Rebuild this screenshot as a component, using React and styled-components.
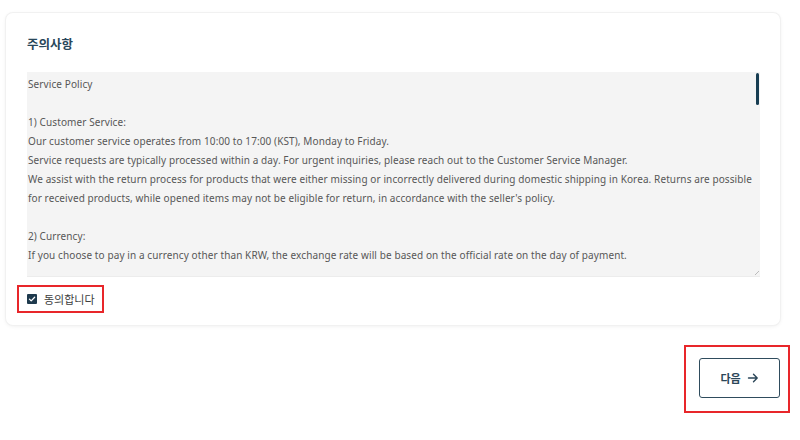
import React from "react";
import styled, { createGlobalStyle } from "styled-components";

const policy = `Service Policy

1) Customer Service:
Our customer service operates from 10:00 to 17:00 (KST), Monday to Friday.
Service requests are typically processed within a day. For urgent inquiries, please reach out to the Customer Service Manager.
We assist with the return process for products that were either missing or incorrectly delivered during domestic shipping in Korea. Returns are possible
for received products, while opened items may not be eligible for return, in accordance with the seller's policy.

2) Currency:
If you choose to pay in a currency other than KRW, the exchange rate will be based on the official rate on the day of payment.`;

export default function App() {
  return (
    <>
      <GlobalStyle />
      <Page>
        <Card>
          <Title>주의사항</Title>
          <PolicyBox>
            <PolicyText>{policy}</PolicyText>
            <Thumb />
            <Grip />
          </PolicyBox>
          <AgreeRow>
            <Highlight $pad="5px 7px 5px 8px">
              <Agree>
                <CheckBox>
                  <svg width="8" height="8" viewBox="0 0 10 10">
                    <path
                      d="M1.8 5.2 L4 7.3 L8.3 2.8"
                      fill="none"
                      stroke="#fff"
                      strokeWidth="1.6"
                      strokeLinecap="round"
                      strokeLinejoin="round"
                    />
                  </svg>
                </CheckBox>
                <span>동의합니다</span>
              </Agree>
            </Highlight>
          </AgreeRow>
        </Card>
        <Footer>
          <Highlight $pad="11px 8px 13px 13px">
            <NextButton>
              다음
              <svg width="12" height="12" viewBox="0 0 12 12">
                <path
                  d="M1.5 6 H10 M6.5 2.3 L10.2 6 L6.5 9.7"
                  fill="none"
                  stroke="#2b4658"
                  strokeWidth="1.4"
                  strokeLinecap="round"
                  strokeLinejoin="round"
                />
              </svg>
            </NextButton>
          </Highlight>
        </Footer>
      </Page>
    </>
  );
}

const GlobalStyle = createGlobalStyle`
  body {
    margin: 0;
    background: #ffffff;
    font-family: "Noto Sans", "Noto Sans CJK KR", sans-serif;
  }
`;

const Page = styled.div`
  width: 800px;
  height: 440px;
  padding: 13px 0 0 6px;
  box-sizing: border-box;
`;

const Card = styled.section`
  width: 774px;
  height: 312px;
  box-sizing: border-box;
  padding: 22px 20px 0 21px;
  background: #fff;
  border-radius: 7px;
  box-shadow: 0 0 0 1px #f1f1f1, 0 1px 4px rgba(0, 0, 0, 0.08);
`;

const Title = styled.h2`
  margin: 0 0 19px;
  font-family: "Noto Sans CJK KR", sans-serif;
  font-size: 12.5px;
  line-height: 18px;
  font-weight: 700;
  color: #29475a;
`;

const PolicyBox = styled.div`
  position: relative;
  height: 205px;
  background: #f4f4f4;
  border-bottom: 1px solid #ececec;
  box-sizing: border-box;
  overflow: hidden;
`;

const PolicyText = styled.div`
  padding: 3px 6px 0 1px;
  white-space: pre;
  font-family: "Noto Sans", sans-serif;
  font-size: 10px;
  letter-spacing: 0.1px;
  line-height: 19px;
  color: #575757;
`;

const Thumb = styled.div`
  position: absolute;
  top: 1px;
  right: 1px;
  width: 3px;
  height: 32px;
  border-radius: 2px;
  background: #173d52;
`;

const Grip = styled.div`
  position: absolute;
  right: 1px;
  bottom: 1px;
  width: 4px;
  height: 4px;
  background: linear-gradient(135deg, transparent 50%, #bbb 50%, #bbb 60%, transparent 60%);
`;

const AgreeRow = styled.div`
  display: flex;
  margin: 8px 0 0 -10px;
`;

const Highlight = styled.div`
  display: inline-flex;
  padding: ${(p) => p.$pad};
  border: 2px solid #e8262a;
`;

const Agree = styled.label`
  display: flex;
  align-items: center;
  gap: 7px;
  font-family: "Noto Sans CJK KR", sans-serif;
  font-size: 11px;
  line-height: 14px;
  color: #3d3d3d;
`;

const CheckBox = styled.span`
  display: inline-flex;
  align-items: center;
  justify-content: center;
  width: 10px;
  height: 10px;
  border-radius: 1px;
  background: #1e3a4d;
`;

const Footer = styled.div`
  display: flex;
  justify-content: flex-end;
  width: 790px;
  margin-top: 20px;
  margin-left: -6px;
`;

const NextButton = styled.button`
  display: flex;
  align-items: center;
  justify-content: center;
  gap: 6px;
  width: 81px;
  height: 40px;
  padding: 0;
  background: #fff;
  border: 1.5px solid #2f4c5d;
  border-radius: 3px;
  font-family: "Noto Sans CJK KR", sans-serif;
  font-size: 11px;
  font-weight: 700;
  color: #2b4658;
`;
